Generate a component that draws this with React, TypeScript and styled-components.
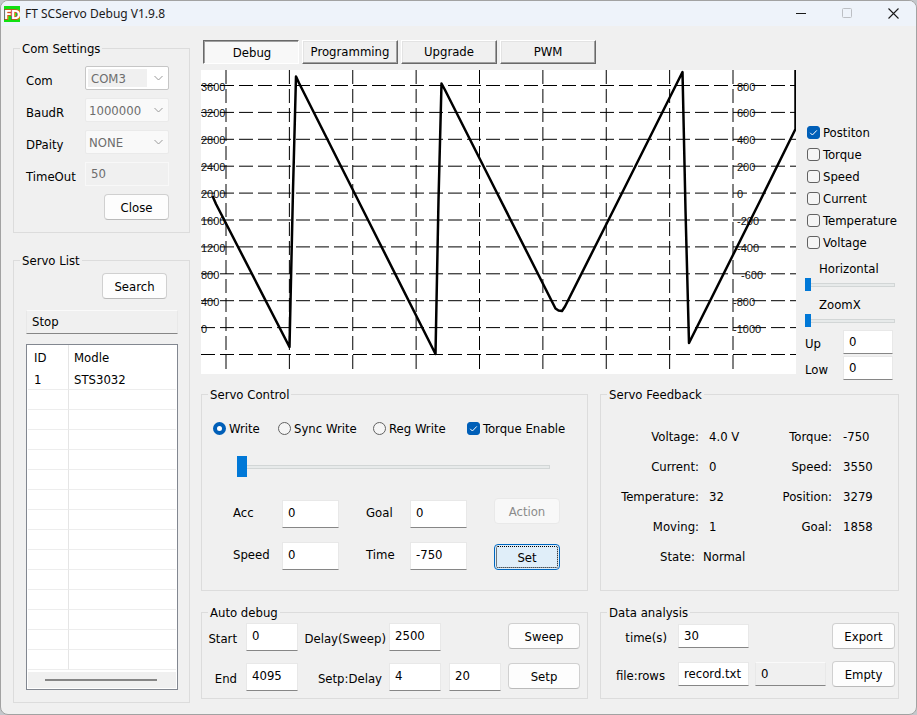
import React from "react";
import styled, { createGlobalStyle, css } from "styled-components";

const GlobalStyle = createGlobalStyle`
  *, *::before, *::after { box-sizing: border-box; }
  body {
    margin: 0;
    background: #c4c8cc;
    color: #000;
    font: 13px/17px "DejaVu Sans Condensed", "Noto Sans", sans-serif;
  }
  button, input, select { font: inherit; color: inherit; margin: 0; }
`;

/* ---------- window frame ---------- */

const Window = styled.div`
  display: flex;
  flex-direction: column;
  min-height: 100vh;
  background: #f0f0f0;
  border: 1px solid #a2a2a2;
  border-radius: 8px;
  overflow: hidden;
`;

const TitleBar = styled.header`
  display: flex;
  align-items: center;
  height: 25px;
  padding-left: 3px;
  background: #eef3fa;
`;

const Title = styled.h1`
  flex: 1;
  margin: 0 0 0 5px;
  font: 400 12px/17px "Noto Sans", sans-serif;
  color: #1a1a1a;
`;

const CaptionButton = styled.button`
  display: grid;
  place-items: center;
  width: 46px;
  height: 25px;
  padding: 0;
  border: 0;
  background: none;
  color: #1a1a1a;
  &:disabled { color: #bcbfc4; }
`;

const Body = styled.main`
  flex: 1;
  display: grid;
  grid-template-columns: 177px minmax(0, 1fr);
  column-gap: 11px;
  padding: 14px 17px 11px 12px;
`;

const Sidebar = styled.div`
  display: flex;
  flex-direction: column;
  gap: 19px;
`;

const Workspace = styled.div`
  display: flex;
  flex-direction: column;
  min-width: 0;
`;

/* ---------- shared controls ---------- */

const Group = styled.fieldset<{ $pad: string; $grow?: boolean }>`
  display: flex;
  flex-direction: column;
  min-width: 0;
  margin: 0;
  padding: ${(p) => p.$pad};
  border: 1px solid #dcdcdc;
  ${(p) => p.$grow && css`flex: 1;`}
`;

const Legend = styled.legend<{ $inset: number }>`
  margin-left: ${(p) => p.$inset}px;
  padding: 0 2px;
  line-height: 17px;
`;

const Button = styled.button<{ $width: number }>`
  flex: none;
  width: ${(p) => p.$width}px;
  height: 26px;
  padding: 0;
  background: #fdfdfd;
  border: 1px solid #d0d0d0;
  border-bottom-color: #bababa;
  border-radius: 4px;
  &:disabled {
    color: #8b8b8b;
    background: #f8f8f8;
    border-color: #e9e9e9;
  }
`;

const DefaultButton = styled(Button)`
  background: #e0eef9;
  border-color: #0067c0;
  outline: 1px dotted #000;
  outline-offset: -3px;
`;

const SearchButton = styled(Button)`
  margin-right: 11px;
`;

const Field = styled.input<{ $width: number; $tall?: boolean }>`
  width: ${(p) => p.$width}px;
  height: ${(p) => (p.$tall ? 28 : 24)}px;
  padding: ${(p) => (p.$tall ? "0 4px 4px 5px" : "0 4px 1px 5px")};
  background: #fff;
  border: 1px solid #e8e8e8;
  border-bottom-color: #868686;
  border-radius: 0;
  outline: 0;
  &:read-only { background: #f0f0f0; border-top-color: #fafafa; }
  &:disabled {
    color: #6d6d6d;
    background: #f0f0f0;
    border-color: #f8f8f8;
  }
`;

const CheckLabel = styled.label`
  display: flex;
  align-items: center;
  gap: 3px;
  height: 22px;
  white-space: nowrap;
`;

const tick =
  "url(\"data:image/svg+xml,%3Csvg xmlns='http://www.w3.org/2000/svg' viewBox='0 0 13 13'%3E%3Cpath d='M3.2 6.8l2.2 2.2 4.4-4.6' fill='none' stroke='white'/%3E%3C/svg%3E\")";

const CheckBox = styled.input.attrs({ type: "checkbox" })`
  appearance: none;
  flex: none;
  width: 13px;
  height: 13px;
  background: #f5f5f5;
  border: 1px solid #626262;
  border-radius: 3px;
  &:checked { border-color: #005fb8; background: #005fb8 ${tick} center / 13px 13px; }
`;

const Radio = styled.input.attrs({ type: "radio" })`
  appearance: none;
  flex: none;
  width: 13px;
  height: 13px;
  background: #f5f5f5;
  border: 1px solid #626262;
  border-radius: 50%;
  &:checked { border: 4px solid #005fb8; background: #fff; }
`;

const Range = styled.input.attrs({ type: "range" })<{ $big?: boolean }>`
  appearance: none;
  display: block;
  width: 100%;
  height: ${(p) => (p.$big ? 21 : 13)}px;
  background: none;
  &::-webkit-slider-runnable-track {
    height: 4px;
    background: #e7eaea;
    border: 1px solid #d2d6d6;
  }
  &::-webkit-slider-thumb {
    appearance: none;
    width: ${(p) => (p.$big ? 10 : 6)}px;
    height: ${(p) => (p.$big ? 21 : 13)}px;
    margin-top: ${(p) => (p.$big ? -10 : -6)}px;
    margin-left: -1px;
    background: #0078d7;
  }
`;

/* ---------- com settings ---------- */

const SettingRow = styled.div`
  display: grid;
  grid-template-columns: 59px 1fr;
  height: 24px;
  margin-bottom: 8px;
`;

const SettingLabel = styled.label`
  padding-top: 6px;
`;

const Combo = styled.div<{ $active?: boolean }>`
  display: flex;
  align-items: center;
  padding: 2px;
  color: #9a9a9a;
  background: ${(p) => (p.$active ? "#fff" : "#f9f9f9")};
  border: 1px solid ${(p) => (p.$active ? "#c6c6c6" : "#eaeaea")};
  border-radius: 2px;
  select {
    appearance: none;
    flex: 1;
    min-width: 0;
    height: 18px;
    padding: 0 ${(p) => (p.$active ? 3 : 1)}px;
    border: 0;
    opacity: 1;
    color: #6d6d6d;
    background: ${(p) => (p.$active ? "#f0f0f0" : "transparent")};
  }
  svg { flex: none; margin: 0 3px 0 7px; }
`;

const ButtonRow = styled.div`
  display: flex;
  justify-content: flex-end;
`;

/* ---------- servo list ---------- */

const Status = styled(Field)`
  width: 100%;
  margin: 11px 0 10px;
`;

const ListBox = styled.div`
  flex: 1;
  display: flex;
  flex-direction: column;
  padding: 0 1px 1px;
  background: #fff;
  border: 1px solid #828790;
`;

const ServoTable = styled.table`
  width: 100%;
  border-spacing: 0;
  table-layout: fixed;
  margin-bottom: auto;
  th, td { padding: 0 0 0 5px; text-align: left; font-weight: 400; }
  th { height: 25px; }
  td { height: 20px; border-bottom: 1px solid #ededed; }
  th:first-child, td:first-child {
    width: 41px;
    padding-left: 6px;
    border-right: 1px solid #e5e5e5;
  }
`;

const ScrollBar = styled.div`
  height: 16px;
  padding: 7px 19px 7px 17px;
  background: #f0f0f0;
`;

const ScrollThumb = styled.div`
  height: 2px;
  background: #868686;
`;

/* ---------- upper workspace ---------- */

const Upper = styled.section`
  display: flex;
  align-items: flex-start;
  gap: 9px;
  margin-bottom: 6px;
`;

const ChartColumn = styled.div`
  flex: 1;
  min-width: 0;
`;

const Tabs = styled.div`
  display: flex;
  gap: 3px;
  margin: 0 0 6px 2px;
`;

const Tab = styled.button`
  width: 96px;
  height: 24px;
  padding: 0 0 1px;
  background: #f0f0f0;
  border: 1px solid;
  border-color: #fff #696969 #696969 #fff;
  box-shadow: inset -1px -1px #a0a0a0, inset 1px 1px #e3e3e3;
  &[aria-selected="true"] {
    padding: 1px 0 0 2px;
    background: #f8f8f8;
    border-color: #696969 #fff #fff #696969;
    box-shadow: inset 1px 1px #a0a0a0;
  }
`;

const ChartSvg = styled.svg`
  display: block;
  width: 100%;
  height: auto;
  background: #fff;
  text { font: 11px "Liberation Sans", sans-serif; fill: #111; }
`;

const Side = styled.aside`
  width: 94px;
  flex: none;
  padding-top: 81px;
`;

const SideChecks = styled.div`
  margin: 0 0 7px 2px;
`;

const Sliders = styled.div`
  display: grid;
  gap: 5px;
  margin: 0 4px 3px 0;
  label { display: block; height: 18px; padding-left: 14px; }
`;

const LimitRow = styled.div`
  display: grid;
  grid-template-columns: 38px 50px;
  margin-bottom: 2px;
  &:last-child { margin-bottom: 0; }
  label { padding-top: 5px; }
`;

/* ---------- lower workspace ---------- */

const Pair = styled.section`
  display: grid;
  grid-template-columns: minmax(0, 387fr) minmax(0, 299fr);
  column-gap: 12px;
  & + & { margin-top: 13px; }
`;

const ModeRow = styled.div`
  display: grid;
  grid-template-columns: 65px 95px 94px auto;
`;

const GoalSlider = styled.div`
  padding: 17px 26px 21px 24px;
`;

const ControlArea = styled.div`
  display: flex;
  align-items: flex-end;
  padding-left: 20px;
`;

const ControlGrid = styled.div`
  display: grid;
  grid-template-columns: 49px 84px 44px 84px;
  row-gap: 14px;
  label { padding-top: 4px; }
`;

const ButtonStack = styled.div`
  display: grid;
  gap: 20px;
`;

const FeedbackGrid = styled.dl`
  display: grid;
  grid-template-columns: 142px 1fr;
  row-gap: 13px;
  margin: 0;
`;

const Reading = styled.div<{ $labelWidth: number; $gap: number }>`
  display: flex;
  gap: ${(p) => p.$gap}px;
  white-space: nowrap;
  dt { flex: none; width: ${(p) => p.$labelWidth}px; text-align: right; }
  dd { margin: 0; }
`;

const AutoGrid = styled.div`
  display: grid;
  grid-template-columns: 44px 52px 91px 60px 59px 72px;
  row-gap: 12px;
`;

const EndLabel = styled.label<{ $right: number }>`
  padding: 7px ${(p) => p.$right}px 0 0;
  text-align: right;
  white-space: nowrap;
`;

const AutoButton = styled(Button)`
  grid-column: 6;
`;

const DataGrid = styled.div`
  display: grid;
  grid-template-columns: 77px 77px 77px 1fr;
  row-gap: 12px;
  align-items: center;
  justify-items: start;
`;

const DataLabel = styled.label<{ $right: number }>`
  justify-self: end;
  padding: 2px ${(p) => p.$right}px 0 0;
`;

const LastButton = styled(Button)`
  grid-column: 4;
  justify-self: end;
`;

/* ---------- drawings ---------- */

const AppIcon = () => (
  <svg width="16" height="16" viewBox="0 0 16 16" aria-hidden="true">
    <rect width="16" height="16" fill="#12e012" />
    <g
      fontFamily="DejaVu Sans Condensed"
      fontWeight="700"
      fontSize="13"
      fill="#fff"
      stroke="#d8402a"
      strokeWidth="1.6"
      paintOrder="stroke"
    >
      <text x="0" y="13">F</text>
      <text x="7" y="13">D</text>
    </g>
  </svg>
);

const Chevron = () => (
  <svg width="9" height="6" viewBox="0 0 9 6" fill="none" stroke="currentColor" aria-hidden="true">
    <path d="M.5 1l4 4 4-4" />
  </svg>
);

const TRACE =
  "M11.5 126L15 134L88.5 277L92 120L95 6.5L98 13L162 140L234.5 284L237.5 130L240.5 13.5L244 20L294 119L354.5 238.5L357.5 240.5L361 241L364 236.5L417 131L481.5 2L484.5 140L488 273L559 131L594.5 59V0";

const leftScale = [3600, 3200, 2800, 2400, 2000, 1600, 1200, 800, 400, 0];
const rightScale: [number, number][] = [
  [800, 536], [600, 536], [400, 536], [200, 536], [0, 536],
  [-200, 536], [-400, 536], [-600, 540], [-800, 532], [-1000, 532],
];
const gridY = (i: number) => 15.5 + 26.9 * i;
const gridX = (i: number) => 25 + 63.375 * i;

const Chart = () => (
  <ChartSvg viewBox="0 0 595 304" role="img" aria-label="Servo position trace">
    {leftScale.map((v, i) => (
      <text key={v} x="0" y={gridY(i) + 5}>{v}</text>
    ))}
    {rightScale.map(([v, x], i) => (
      <text key={v} x={x} y={gridY(i) + 5}>{v}</text>
    ))}
    <g stroke="#000" strokeDasharray="14 5">
      {Array.from({ length: 11 }, (_, i) => (
        <line key={i} x1="0" x2="595" y1={gridY(i)} y2={gridY(i)} />
      ))}
      {Array.from({ length: 9 }, (_, i) => (
        <line key={i} y1="0" y2="304" x1={gridX(i)} x2={gridX(i)} />
      ))}
    </g>
    <path d={TRACE} fill="none" stroke="#000" strokeWidth="2.5" strokeLinejoin="round" />
  </ChartSvg>
);

/* ---------- page ---------- */

const channels = ["Postiton", "Torque", "Speed", "Current", "Temperature", "Voltage"];

const feedback: { label: string; value: string; tight?: boolean }[] = [
  { label: "Voltage:", value: "4.0 V" },
  { label: "Torque:", value: "-750" },
  { label: "Current:", value: "0" },
  { label: "Speed:", value: "3550" },
  { label: "Temperature:", value: "32" },
  { label: "Position:", value: "3279" },
  { label: "Moving:", value: "1" },
  { label: "Goal:", value: "1858" },
  { label: "State:", value: "Normal", tight: true },
];

const combos = [
  { id: "com", label: "Com", value: "COM3", active: true },
  { id: "baud", label: "BaudR", value: "1000000" },
  { id: "parity", label: "DPaity", value: "NONE" },
];

export default function App() {
  return (
    <>
      <GlobalStyle />
      <Window>
        <TitleBar>
          <AppIcon />
          <Title>FT SCServo Debug V1.9.8</Title>
          <CaptionButton aria-label="Minimize">
            <svg width="11" height="11" stroke="currentColor"><path d="M0 5.5h10" /></svg>
          </CaptionButton>
          <CaptionButton aria-label="Maximize" disabled>
            <svg width="11" height="11" stroke="currentColor" fill="none">
              <rect x=".5" y=".5" width="9" height="9" rx="1" />
            </svg>
          </CaptionButton>
          <CaptionButton aria-label="Close window">
            <svg width="11" height="11" stroke="currentColor" strokeWidth="1.1">
              <path d="M.5.5l10 10M10.5.5l-10 10" />
            </svg>
          </CaptionButton>
        </TitleBar>
        <Body>
          <Sidebar>
            <Group $pad="9px 20px 12px 12px">
              <Legend $inset={-6}>Com Settings</Legend>
              {combos.map((c) => (
                <SettingRow key={c.id}>
                  <SettingLabel htmlFor={c.id}>{c.label}</SettingLabel>
                  <Combo $active={c.active}>
                    <select id={c.id} disabled defaultValue={c.value}>
                      <option>{c.value}</option>
                    </select>
                    <Chevron />
                  </Combo>
                </SettingRow>
              ))}
              <SettingRow>
                <SettingLabel htmlFor="timeout">TimeOut</SettingLabel>
                <Field id="timeout" $width={84} disabled defaultValue="50" />
              </SettingRow>
              <ButtonRow><Button $width={65}>Close</Button></ButtonRow>
            </Group>
            <Group $pad="4px 11px 12px 12px" $grow>
              <Legend $inset={-6}>Servo List</Legend>
              <ButtonRow><SearchButton $width={65}>Search</SearchButton></ButtonRow>
              <Status $width={152} readOnly aria-label="Search status" defaultValue="Stop" />
              <ListBox>
                <ServoTable>
                  <thead>
                    <tr><th>ID</th><th>Modle</th></tr>
                  </thead>
                  <tbody>
                    <tr><td>1</td><td>STS3032</td></tr>
                    {Array.from({ length: 14 }, (_, i) => (
                      <tr key={i}><td /><td /></tr>
                    ))}
                  </tbody>
                </ServoTable>
                <ScrollBar><ScrollThumb /></ScrollBar>
              </ListBox>
            </Group>
          </Sidebar>
          <Workspace>
            <Upper>
              <ChartColumn>
                <Tabs role="tablist">
                  {["Debug", "Programming", "Upgrade", "PWM"].map((t, i) => (
                    <Tab key={t} role="tab" aria-selected={i === 0}>{t}</Tab>
                  ))}
                </Tabs>
                <Chart />
              </ChartColumn>
              <Side>
                <SideChecks>
                  {channels.map((c, i) => (
                    <CheckLabel key={c}><CheckBox defaultChecked={i === 0} />{c}</CheckLabel>
                  ))}
                </SideChecks>
                <Sliders>
                  <div>
                    <label htmlFor="horizontal">Horizontal</label>
                    <Range id="horizontal" defaultValue={0} />
                  </div>
                  <div>
                    <label htmlFor="zoomx">ZoomX</label>
                    <Range id="zoomx" defaultValue={0} />
                  </div>
                </Sliders>
                <LimitRow>
                  <label htmlFor="up">Up</label>
                  <Field id="up" $width={50} defaultValue="0" />
                </LimitRow>
                <LimitRow>
                  <label htmlFor="low">Low</label>
                  <Field id="low" $width={50} defaultValue="0" />
                </LimitRow>
              </Side>
            </Upper>
            <Pair>
              <Group $pad="14px 11px 20px">
                <Legend $inset={-5}>Servo Control</Legend>
                <ModeRow>
                  <CheckLabel><Radio name="mode" defaultChecked />Write</CheckLabel>
                  <CheckLabel><Radio name="mode" />Sync Write</CheckLabel>
                  <CheckLabel><Radio name="mode" />Reg Write</CheckLabel>
                  <CheckLabel><CheckBox defaultChecked />Torque Enable</CheckLabel>
                </ModeRow>
                <GoalSlider><Range $big aria-label="Goal position" defaultValue={0} /></GoalSlider>
                <ControlArea>
                  <ControlGrid>
                    <label htmlFor="acc">Acc</label>
                    <Field id="acc" $width={57} $tall defaultValue="0" />
                    <label htmlFor="goal">Goal</label>
                    <Field id="goal" $width={57} $tall defaultValue="0" />
                    <label htmlFor="speed">Speed</label>
                    <Field id="speed" $width={57} $tall defaultValue="0" />
                    <label htmlFor="time">Time</label>
                    <Field id="time" $width={57} $tall defaultValue="-750" />
                  </ControlGrid>
                  <ButtonStack>
                    <Button $width={66} disabled>Action</Button>
                    <DefaultButton $width={66}>Set</DefaultButton>
                  </ButtonStack>
                </ControlArea>
              </Group>
              <Group $pad="25px 0 0">
                <Legend $inset={6}>Servo Feedback</Legend>
                <FeedbackGrid>
                  {feedback.map((f, i) => (
                    <Reading
                      key={f.label}
                      $labelWidth={f.tight ? 94 : i % 2 ? 89 : 98}
                      $gap={f.tight ? 8 : i % 2 ? 11 : 10}
                    >
                      <dt>{f.label}</dt>
                      <dd>{f.value}</dd>
                    </Reading>
                  ))}
                </FeedbackGrid>
              </Group>
            </Pair>
            <Pair>
              <Group $pad="2px 0 7px">
                <Legend $inset={6}>Auto debug</Legend>
                <AutoGrid>
                  <EndLabel htmlFor="start" $right={9}>Start</EndLabel>
                  <Field id="start" $width={52} $tall defaultValue="0" />
                  <EndLabel htmlFor="sweep" $right={3}>Delay(Sweep)</EndLabel>
                  <Field id="sweep" $width={52} $tall defaultValue="2500" />
                  <AutoButton $width={72}>Sweep</AutoButton>
                  <EndLabel htmlFor="end" $right={9}>End</EndLabel>
                  <Field id="end" $width={52} $tall defaultValue="4095" />
                  <EndLabel htmlFor="step" $right={7}>Setp:Delay</EndLabel>
                  <Field id="step" $width={52} $tall defaultValue="4" />
                  <Field id="delay" aria-label="Step delay" $width={52} $tall defaultValue="20" />
                  <AutoButton $width={72}>Setp</AutoButton>
                </AutoGrid>
              </Group>
              <Group $pad="2px 3px 0 0">
                <Legend $inset={6}>Data analysis</Legend>
                <DataGrid>
                  <DataLabel htmlFor="seconds" $right={11}>time(s)</DataLabel>
                  <Field id="seconds" $width={71} defaultValue="30" />
                  <LastButton $width={63}>Export</LastButton>
                  <DataLabel htmlFor="file" $right={13}>file:rows</DataLabel>
                  <Field id="file" $width={71} defaultValue="record.txt" />
                  <Field aria-label="Row count" $width={71} readOnly defaultValue="0" />
                  <LastButton $width={63}>Empty</LastButton>
                </DataGrid>
              </Group>
            </Pair>
          </Workspace>
        </Body>
      </Window>
    </>
  );
}
